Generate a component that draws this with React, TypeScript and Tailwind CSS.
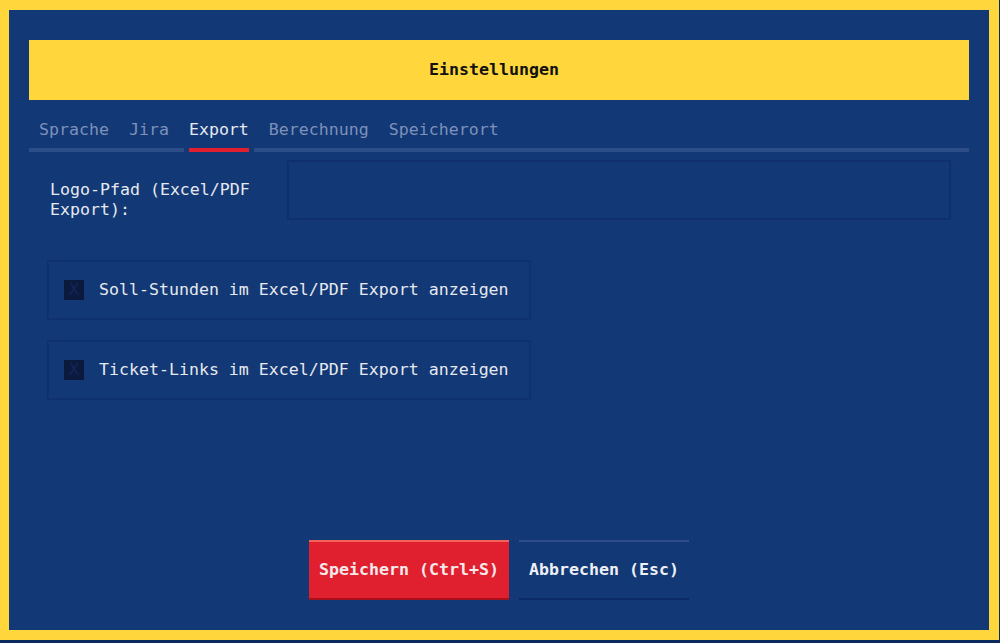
import React from "react";

const tabs = ["Sprache", "Jira", "Export", "Berechnung", "Speicherort"];

const options = [
  "Soll-Stunden im Excel/PDF Export anzeigen",
  "Ticket-Links im Excel/PDF Export anzeigen",
];

export default function App() {
  return (
    <div className="w-[1000px] h-[643px] bg-[#0b2a5c] overflow-hidden">
      <div
        className="w-[999px] h-[640px] border-l-[9px] border-t-[10px] border-r-[10px] border-b-[10px] border-[#ffd63b] bg-[#133876] flex flex-col px-5 pt-[30px] text-[16.6px] leading-5 text-[#e6e9ef]"
        style={{ fontFamily: '"DejaVu Sans Mono", "Liberation Mono", monospace' }}
      >
        {/* Title bar */}
        <div className="h-[60px] shrink-0 bg-[#ffd63b] flex items-center justify-center pr-[10px] font-bold text-[#111111]">
          Einstellungen
        </div>

        {/* Tabs */}
        <div className="mt-5 flex h-5">
          {tabs.map((t) => (
            <div
              key={t}
              className={
                t === "Export"
                  ? "px-[10px] whitespace-pre text-[#e6e9ef]"
                  : "px-[10px] whitespace-pre text-[#7d91b9]"
              }
            >
              {t}
            </div>
          ))}
        </div>
        <div className="mt-2 flex h-1 shrink-0">
          <div className="w-[155px] bg-[#2d4d89]" />
          <div className="ml-[5px] w-[60px] bg-[#e0202f]" />
          <div className="ml-[5px] flex-1 bg-[#2d4d89]" />
        </div>

        {/* Logo path */}
        <div className="mt-2 flex h-[60px] shrink-0">
          <div className="w-[258px] pl-[21px] pt-5 whitespace-pre">
            {"Logo-Pfad (Excel/PDF\nExport):"}
          </div>
          <div className="w-[664px] border-2 border-[#0f306c]" />
        </div>

        {/* Checkboxes */}
        {options.map((o, i) => (
          <div
            key={o}
            className={
              (i === 0 ? "mt-10 " : "mt-5 ") +
              "ml-[18px] w-[484px] h-[60px] shrink-0 border-2 border-[#0f316e] flex items-center pl-[15px]"
            }
          >
            <div className="w-5 h-5 bg-[#0b1a3c] text-[#11265a] flex items-center justify-center">
              X
            </div>
            <span className="ml-[15px] whitespace-pre">{o}</span>
          </div>
        ))}

        {/* Buttons */}
        <div className="mt-[140px] flex justify-center gap-[10px]">
          <div className="w-[200px] h-[60px] border-t-2 border-b-2 border-t-[#f3625b] border-b-[#a8101b] bg-[#e0202f] flex items-center justify-center font-bold text-[#f4e9eb]">
            Speichern (Ctrl+S)
          </div>
          <div className="w-[170px] h-[60px] border-t-2 border-b-2 border-t-[#2e4b8a] border-b-[#0b2a66] flex items-center justify-center font-bold text-[#eef0f5]">
            Abbrechen (Esc)
          </div>
        </div>
      </div>
    </div>
  );
}
